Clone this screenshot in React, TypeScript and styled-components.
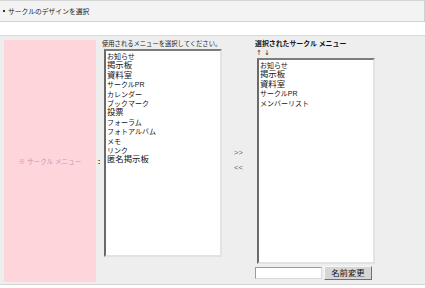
import styled, { createGlobalStyle } from 'styled-components';

const AVAILABLE = [
  { label: 'お知らせ', large: false },
  { label: '掲示板', large: true },
  { label: '資料室', large: true },
  { label: 'サークルPR', large: false },
  { label: 'カレンダー', large: false },
  { label: 'ブックマーク', large: false },
  { label: '投票', large: true },
  { label: 'フォーラム', large: false },
  { label: 'フォトアルバム', large: false },
  { label: 'メモ', large: false },
  { label: 'リンク', large: false },
  { label: '匿名掲示板', large: true },
];

const SELECTED = [
  { label: 'お知らせ', large: false },
  { label: '掲示板', large: true },
  { label: '資料室', large: true },
  { label: 'サークルPR', large: false },
  { label: 'メンバーリスト', large: false },
];

const GlobalStyle = createGlobalStyle`
  html, body {
    margin: 0;
    padding: 0;
    background: #fff;
  }
  body {
    font-family: "Liberation Sans", "Noto Sans CJK JP", sans-serif;
    color: #000;
  }
`;

const App = () => {
  return (
    <Page>
      <GlobalStyle />
      <TitleBar>
        <Bullet />
        サークルのデザインを選択
      </TitleBar>
      <Editor>
        <NameCell>※ サークル メニュー</NameCell>
        <Colon>:</Colon>
        <Column>
          <Caption>使用されるメニューを選択してください。</Caption>
          <ListBox $height={208}>
            {AVAILABLE.map((item) => (
              <ListItem key={item.label} $large={item.large}>
                {item.label}
              </ListItem>
            ))}
          </ListBox>
        </Column>
        <MoveButtons>
          <MoveLink>&gt;&gt;</MoveLink>
          <MoveLink>&lt;&lt;</MoveLink>
        </MoveButtons>
        <Column>
          <Heading>選択されたサークル メニュー</Heading>
          <Order>↑ ↓</Order>
          <ListBox $height={206}>
            {SELECTED.map((item) => (
              <ListItem key={item.label} $large={item.large}>
                {item.label}
              </ListItem>
            ))}
          </ListBox>
          <RenameRow>
            <NameInput type="text" />
            <RenameButton type="button">名前変更</RenameButton>
          </RenameRow>
        </Column>
      </Editor>
    </Page>
  );
};

export default App;

const Page = styled.div`
  width: 425px;
  height: 288px;
  overflow: hidden;

  background: #fff;
`;

const TitleBar = styled.div`
  display: flex;
  gap: 3px;
  align-items: center;
  box-sizing: border-box;
  height: 22px;
  padding-left: 3px;

  background: #f3f3f3;
  border-top: 1px solid #d6d6d6;
  border-bottom: 1px solid #d0d0d0;
  border-right: 1px solid #d0d0d0;
  color: #222;
  font-size: 6.8px;
`;

const Bullet = styled.span`
  width: 2px;
  height: 2px;

  background: #333;
`;

const Editor = styled.div`
  display: flex;
  align-items: stretch;
  box-sizing: border-box;
  height: 250px;
  margin-top: 13px;
  padding: 4px 0 2px 4px;

  background: #eeeeee;
  border-top: 1px solid #dadada;
  border-bottom: 1px solid #d4d4d4;
`;

const NameCell = styled.div`
  display: flex;
  align-items: center;
  justify-content: center;
  width: 92px;

  background: #ffd5dc;
  color: #c99aa2;
  font-size: 6.6px;
`;

const Colon = styled.div`
  display: flex;
  align-items: center;
  justify-content: center;
  width: 6px;

  color: #222;
  font-size: 8px;
  font-weight: bold;
`;

const Column = styled.div`
  display: flex;
  flex-direction: column;
  align-items: flex-start;
  width: 120px;
`;

const Caption = styled.div`
  height: 9px;

  color: #222;
  font-size: 6.3px;
  line-height: 8px;
  white-space: nowrap;
`;

const Heading = styled.div`
  height: 9px;

  color: #111;
  font-size: 6.9px;
  font-weight: bold;
  line-height: 8px;
  white-space: nowrap;
`;

const Order = styled.div`
  height: 9px;
  padding-left: 1px;

  color: #333;
  font-family: "DejaVu Sans", sans-serif;
  font-size: 7px;
  line-height: 8px;
`;

const ListBox = styled.div<{ $height: number }>`
  box-sizing: border-box;
  width: 118px;
  height: ${({ $height }) => $height}px;
  margin-left: 2px;
  padding: 1px 0 0 1px;

  background: #fff;
  border-top: 2px solid #7c7c7c;
  border-left: 2px solid #6a6a6a;
  border-right: 2px solid #e2e2e2;
  border-bottom: 2px solid #e2e2e2;
`;

const ListItem = styled.div<{ $large: boolean }>`
  height: 9.4px;

  color: #111;
  font-size: ${({ $large }) => ($large ? '8.4px' : '7px')};
  line-height: 9.4px;
  white-space: nowrap;
`;

const MoveButtons = styled.div`
  display: flex;
  flex-direction: column;
  gap: 6px;
  align-items: center;
  justify-content: center;
  width: 33px;
  padding-bottom: 2px;
`;

const MoveLink = styled.span`
  color: #666;
  font-size: 7.5px;
  line-height: 9px;
`;

const RenameRow = styled.div`
  display: flex;
  gap: 2px;
  align-items: center;
  margin-top: 2px;
`;

const NameInput = styled.input`
  box-sizing: border-box;
  width: 67px;
  height: 12px;
  margin: 0;
  padding: 0;

  background: #fff;
  border: 1px solid #9a9a9a;
  border-right-color: #d8d8d8;
  border-bottom-color: #d8d8d8;
`;

const RenameButton = styled.button`
  box-sizing: border-box;
  width: 48px;
  height: 14px;
  margin: 0;
  padding: 0;

  background: #d6d6d6;
  border: 1px solid;
  border-color: #f6f6f6 #707070 #707070 #f6f6f6;
  color: #111;
  font-family: "Liberation Sans", "Noto Sans CJK JP", sans-serif;
  font-size: 8.4px;
  line-height: 12px;
`;
